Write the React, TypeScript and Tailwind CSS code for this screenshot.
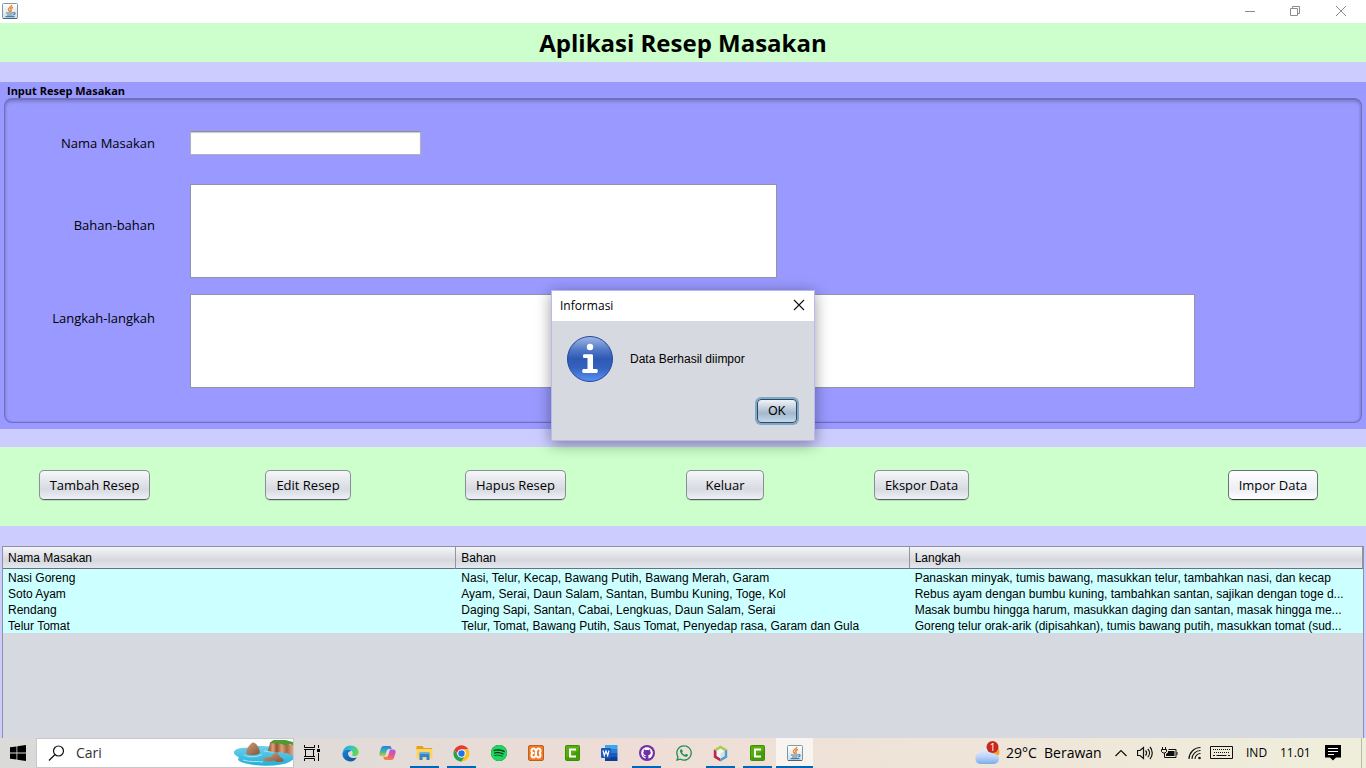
import type { ReactNode } from "react";
import { FaGithub, FaWhatsapp } from "react-icons/fa";
import { SiSpotify } from "react-icons/si";

const recipes = [
  [
    "Nasi Goreng",
    "Nasi, Telur, Kecap, Bawang Putih, Bawang Merah, Garam",
    "Panaskan minyak, tumis bawang, masukkan telur, tambahkan nasi, dan kecap",
  ],
  [
    "Soto Ayam",
    "Ayam, Serai, Daun Salam, Santan, Bumbu Kuning, Toge, Kol",
    "Rebus ayam dengan bumbu kuning, tambahkan santan, sajikan dengan toge d...",
  ],
  [
    "Rendang",
    "Daging Sapi, Santan, Cabai, Lengkuas, Daun Salam, Serai",
    "Masak bumbu hingga harum, masukkan daging dan santan, masak hingga me...",
  ],
  [
    "Telur Tomat",
    "Telur, Tomat, Bawang Putih, Saus Tomat, Penyedap rasa, Garam dan Gula",
    "Goreng telur orak-arik (dipisahkan), tumis bawang putih, masukkan tomat (sud...",
  ],
];

function JavaIcon() {
  return (
    <svg width="16" height="16" viewBox="0 0 16 16" fill="none" aria-hidden="true">
      <defs>
        <linearGradient id="javaBg" x1="0" y1="0" x2="0" y2="1">
          <stop offset="0" stopColor="#ffffff" />
          <stop offset="1" stopColor="#d3dde6" />
        </linearGradient>
      </defs>
      <rect x="0.5" y="0.5" width="15" height="15" rx="1" fill="url(#javaBg)" stroke="#7e97a8" />
      <path d="M1 15.500h14" stroke="#45687f" />
      <path d="M9.800 2C9.500 4 5.800 4.800 6.400 6.800c.3.800 1.200 1 1.400 2M11 4.500C8.800 5 8.300 5.800 9 6.800c.5.600.3 1.300-.2 2" stroke="#ea8420" strokeWidth="1.400" />
      <path d="M4 10h7M5 12h5.500M3.500 13.700h9M11.200 9.800c2.600-.6 2.400 1.700 0 2.100" stroke="#4c7da3" strokeWidth="1.200" />
    </svg>
  );
}

function WindowsLogo() {
  return (
    <svg width="16" height="16" viewBox="0 0 16 16" fill="#000" aria-hidden="true">
      <path d="M0 2.300l6.500-.9v6.200H0zM7.300 1.300L16 0v7.600H7.300zM0 8.400h6.500v6.200L0 13.700zM7.300 8.400H16V16l-8.700-1.300z" />
    </svg>
  );
}

function BeachIcon() {
  return (
    <svg width="59" height="26" viewBox="0 0 59 26" aria-hidden="true">
      <defs>
        <linearGradient id="sea" x1="0" y1="0" x2="0" y2="1">
          <stop offset="0" stopColor="#6fd0ee" />
          <stop offset="1" stopColor="#22afd6" />
        </linearGradient>
        <linearGradient id="rock" x1="0" y1="0" x2="1" y2="1">
          <stop offset="0" stopColor="#cf9e7c" />
          <stop offset="1" stopColor="#855339" />
        </linearGradient>
        <linearGradient id="cliff" x1="0" y1="0" x2="1" y2="0">
          <stop offset="0" stopColor="#8e4a2a" />
          <stop offset="0.200" stopColor="#dda27b" />
          <stop offset="0.350" stopColor="#96502f" />
          <stop offset="0.550" stopColor="#dda27b" />
          <stop offset="0.750" stopColor="#a9643f" />
          <stop offset="1" stopColor="#e0a983" />
        </linearGradient>
      </defs>
      <path d="M0 11.500c3-4 9-3.500 14-4 10-2 16-1.500 24-1l21 5v8c-3 2-5 4-12 5-12 2-24 1.500-35-1-5-1.500-10-3-7-6-3-2-6-3-5-6z" fill="url(#sea)" />
      <path d="M10 15c4 2.500 12 2.500 18-.5M9 20c8 2.500 14 1 20 2M30 11c3 0 5 1 9 1" stroke="#a7e8f7" fill="none" />
      <path d="M12 13.500c0-4 3-8.500 6.500-11 4 0 6.500 5 7.500 10-2 3-11 3.500-14 1z" fill="url(#rock)" />
      <path d="M36 3l3-2 20 4v10c-3 0-4-1-6-2-3 1-5-1-7-1-4 1-7 0-12-1z" fill="url(#cliff)" />
      <path d="M35.500 3l4-3 12 0 7.500 2v3.500l-3-1.500-5 1.500-5-2-5 0z" fill="#4f9a34" />
      <path d="M29 20c1-3 4-3 8-3 2-3 4-4.500 6-4 2 1 2 3 3 4 2 .5 3 2 4 3.500-3 2-8 2-10 0-3 1-8 1.500-11-.5z" fill="url(#rock)" />
    </svg>
  );
}

function EdgeIcon() {
  return (
    <svg width="17" height="17" viewBox="0 0 17 17" aria-hidden="true">
      <defs>
        <linearGradient id="edgeTop" x1="0" y1="0" x2="1" y2="0.300">
          <stop offset="0" stopColor="#1d9fdc" />
          <stop offset="0.500" stopColor="#2fc2cf" />
          <stop offset="1" stopColor="#62d851" />
        </linearGradient>
        <linearGradient id="edgeLow" x1="0" y1="0" x2="1" y2="1">
          <stop offset="0" stopColor="#1688d8" />
          <stop offset="1" stopColor="#124f96" />
        </linearGradient>
      </defs>
      <path d="M.5 8C1 3.500 4.500.5 8.600.5c4.500 0 8 3 8 6.700 0 2.500-2 4-4.300 4-1.600 0-2.600-.7-2-1.500C11.800 7 9 4.500 5.500 4.600 3.300 4.700 1.500 6 .5 8z" fill="url(#edgeTop)" />
      <path d="M.5 8.300c.6-2.200 2.800-3.700 5.200-3.700 1.500 0 2.700.5 3.500 1.300C6.500 6 5.500 8 6.300 10c1 2.800 4.500 4 8.700 2.200-1.500 2.700-3.800 4.300-6.500 4.300-4.800 0-8.400-3.700-8-8.200z" fill="url(#edgeLow)" />
    </svg>
  );
}

function CopilotIcon() {
  return (
    <svg width="17" height="16" viewBox="0 0 17 16" aria-hidden="true">
      <defs>
        <linearGradient id="copA" x1="0" y1="0" x2="0" y2="1">
          <stop offset="0" stopColor="#2a7cec" />
          <stop offset="0.550" stopColor="#3db8a4" />
          <stop offset="1" stopColor="#eec42d" />
        </linearGradient>
        <linearGradient id="copB" x1="0.600" y1="0" x2="0.300" y2="1">
          <stop offset="0" stopColor="#a755ec" />
          <stop offset="0.500" stopColor="#ed5588" />
          <stop offset="1" stopColor="#f28b3e" />
        </linearGradient>
      </defs>
      <path d="M5 1h5.500c1 0 1.500.7 1.800 1.700L12.700 4H10C8.500 4 8 5 7.600 6.300L6 11.500H3C.7 11.500 0 10 .5 8L2 3.300C2.500 1.700 3.500 1 5 1z" fill="url(#copA)" />
      <path d="M12 15H6.500c-1 0-1.500-.7-1.800-1.700L4.300 12H7c1.500 0 2-1 2.400-2.300L11 4.500h3c2.300 0 3 1.500 2.500 3.500L15 12.700C14.500 14.300 13.500 15 12 15z" fill="url(#copB)" />
    </svg>
  );
}

function ExplorerIcon() {
  return (
    <svg width="17" height="16" viewBox="0 0 17 16" aria-hidden="true">
      <path d="M.5 1h6l1.300 2H16v2H.5z" fill="#e3a21a" />
      <path d="M.5 4h16v9.500H.5z" fill="#fcd462" />
      <path d="M3.500 8.500c0-.6.4-1 1-1h8c.6 0 1 .4 1 1V15h-3v-3h-4v3h-3z" fill="#2f86cf" />
      <path d="M3.500 9V8.500c0-.6.4-1 1-1h8c.6 0 1 .4 1 1V9z" fill="#5fb2ec" />
    </svg>
  );
}

function ChromeIcon() {
  return (
    <svg width="17" height="17" viewBox="0 0 48 48" aria-hidden="true">
      <circle cx="24" cy="24" r="23" fill="#fff" />
      <path d="M4.100 12.500a23 23 0 0 1 39.800 0H24a11.500 11.500 0 0 0-10 17.200z" fill="#e33b2e" />
      <path d="M43.900 12.500A23 23 0 0 1 24 47l10-17.300a11.500 11.500 0 0 0-10-17.200z" fill="#fcc31e" />
      <path d="M24 47A23 23 0 0 1 4.100 12.500L14 29.700a11.500 11.500 0 0 0 20 0z" fill="#2aa14c" />
      <circle cx="24" cy="24" r="11.500" fill="#fff" />
      <circle cx="24" cy="24" r="9" fill="#2372e8" />
    </svg>
  );
}

function XamppIcon() {
  return (
    <svg width="16" height="16" viewBox="0 0 16 16" aria-hidden="true">
      <rect x="0.500" y="0.500" width="15" height="15" rx="1.500" fill="#f37a24" stroke="#c05f1c" />
      <path d="M6.300 8H5c-1.500-.2-1.500-1.200-1.500-2.500S4.500 3.500 6 3.500c1.300 0 1 2 2 2s.7-2 2-2c1.500 0 2.500.7 2.500 2S12.500 7.800 11 8c1.500.2 1.500 1.200 1.500 2.500s-1 2-2.500 2c-1.300 0-1-2-2-2s-.7 2-2 2c-1.500 0-2.500-.7-2.500-2S3.500 8.200 5 8h1.300M8 6v4" fill="none" stroke="#fff" strokeWidth="2" />
    </svg>
  );
}

function CamtasiaIcon() {
  return (
    <svg width="15" height="16" viewBox="0 0 15 16" aria-hidden="true">
      <rect x="0.500" y="0.500" width="14" height="15" rx="1" fill="#58ae0c" stroke="#3c8d0a" />
      <path d="M1 13l13-8v10H1z" fill="#459b08" />
      <path d="M11 4.500H5v7h6" fill="none" stroke="#fff" strokeWidth="2" />
    </svg>
  );
}

function WordIcon() {
  return (
    <svg width="17" height="16" viewBox="0 0 17 16" aria-hidden="true">
      <path d="M4 0h12.500v4H4z" fill="#41a5ee" />
      <path d="M4 4h12.500v4H4z" fill="#2b7cd3" />
      <path d="M4 8h12.500v4H4z" fill="#185abd" />
      <path d="M4 12h12.500v4H4z" fill="#103f91" />
      <rect x="0" y="3" width="10" height="10" rx="1" fill="#185abd" />
      <path d="M2 5.500l1.300 5L5 6l1.700 4.500 1.300-5" stroke="#fff" fill="none" strokeWidth="1.200" />
    </svg>
  );
}

function GithubDesktopIcon() {
  return (
    <span className="flex size-4 items-center justify-center rounded-full bg-[#7130a3]">
      <FaGithub className="size-3 text-white" />
    </span>
  );
}

function NetbeansIcon() {
  return (
    <svg width="15" height="17" viewBox="0 0 15 17" aria-hidden="true">
      <path d="M7.500.5l6.700 4-6.700 4-6.700-4z" fill="#a9cd50" />
      <path d="M.8 4.500l6.700 4v8l-6.700-4z" fill="#b92850" />
      <path d="M14.200 4.500l-6.700 4v8l6.700-4z" fill="#4a9fcb" />
      <path d="M7.500 3.500l4 2.500v5l-4 2.500-4-2.500V6z" fill="#f4f4f4" />
      <path d="M7.500 8.500v5l4-2.500V6z" fill="#d9dfe3" />
    </svg>
  );
}

type Task = { name: string; icon: ReactNode; state?: "open" | "active" };

const tasks: Task[] = [
  { name: "Edge", icon: <EdgeIcon /> },
  { name: "Copilot", icon: <CopilotIcon /> },
  { name: "File Explorer", icon: <ExplorerIcon />, state: "open" },
  { name: "Chrome", icon: <ChromeIcon />, state: "open" },
  {
    name: "Spotify",
    icon: (
      <span className="rounded-full bg-[#10381d]">
        <SiSpotify className="size-4 text-[#1ed760]" />
      </span>
    ),
  },
  { name: "XAMPP", icon: <XamppIcon /> },
  { name: "Camtasia", icon: <CamtasiaIcon /> },
  { name: "Word", icon: <WordIcon /> },
  { name: "GitHub Desktop", icon: <GithubDesktopIcon />, state: "open" },
  { name: "WhatsApp", icon: <FaWhatsapp className="size-[18px] text-[#1f8f53]" /> },
  { name: "NetBeans", icon: <NetbeansIcon />, state: "open" },
  { name: "Camtasia Recorder", icon: <CamtasiaIcon />, state: "open" },
  { name: "Java", icon: <JavaIcon />, state: "active" },
];

function TitleBar() {
  return (
    <div className="flex h-[23px] shrink-0 items-center justify-between bg-white pr-px pb-0.5 pl-0.5">
      <JavaIcon />
      <div className="flex items-center text-[#8c8c8c]">
        <button aria-label="Minimize" className="flex w-[45px] justify-center">
          <svg width="10" height="10" viewBox="0 0 10 10" stroke="currentColor">
            <path d="M0 5.500h10" />
          </svg>
        </button>
        <button aria-label="Restore" className="flex w-[45px] justify-center">
          <svg width="10" height="10" viewBox="0 0 10 10" stroke="currentColor" fill="none">
            <path d="M.5 2.500h7v7h-7zM2.500 2.500v-2h7v7h-2" />
          </svg>
        </button>
        <button aria-label="Close" className="flex w-[48px] justify-center">
          <svg width="10" height="10" viewBox="0 0 10 10" stroke="currentColor">
            <path d="M0 0l10 10M10 0L0 10" />
          </svg>
        </button>
      </div>
    </div>
  );
}

const labelClass =
  "w-[155px] shrink-0 text-right font-['Open_Sans',sans-serif] text-[13px] leading-4";
const areaClass =
  "block h-[94px] max-w-full resize-none border border-[#9295a8] bg-white p-1 text-xs outline-none";

function RecipeForm() {
  return (
    <fieldset className="shrink-0 bg-[#9999ff] px-1 pb-1.5">
      <legend className="float-left h-4 w-full px-[3px] font-['Open_Sans',sans-serif] text-[11px] leading-[18px] font-bold">
        Input Resep Masakan
      </legend>
      <div className="clear-both flex flex-col rounded-lg border-x border-t-2 border-b border-[#6f6fbc] pt-[31px] pb-[34px] shadow-[inset_0_2px_3px_#7f7fd4,inset_1px_0_2px_#8888e0,inset_-1px_0_2px_#8888e0]">
        <div className="-ml-[5px] flex items-center gap-[35px]">
          <label htmlFor="nama" className={labelClass}>
            Nama Masakan
          </label>
          <input
            id="nama"
            className="h-6 w-[231px] border border-[#b0b1bd] border-t-[#8e8f96] bg-white px-1 text-xs shadow-[inset_0_1px_1px_#c8c8cc] outline-none"
          />
        </div>
        <div className="mt-[29px] -ml-[5px] flex items-start gap-[35px]">
          <label htmlFor="bahan" className={`${labelClass} pt-[33px]`}>
            Bahan-bahan
          </label>
          <textarea id="bahan" className={`${areaClass} w-[587px]`} />
        </div>
        <div className="mt-4 -ml-[5px] flex items-start gap-[35px]">
          <label htmlFor="langkah" className={`${labelClass} pt-4`}>
            Langkah-langkah
          </label>
          <textarea id="langkah" className={`${areaClass} w-[1005px]`} />
        </div>
      </div>
    </fieldset>
  );
}

const buttonClass =
  "h-[30px] rounded-[5px] border border-[#8b8e96] border-b-[#585b62] bg-linear-to-b from-[#f6f7f9] from-0% via-[#d8dae2] via-65% to-[#eef0f6] font-['Open_Sans',sans-serif] text-[13px] leading-4 whitespace-nowrap shadow-[0_1px_0_#b4e0b8]";

function Actions() {
  return (
    <div className="grid h-[79px] shrink-0 grid-cols-[226px_200px_221px_188px_1fr_auto] items-center justify-items-start bg-[#ccffcc] pr-12 pb-1 pl-[39px]">
      <button className={`${buttonClass} w-[111px]`}>Tambah Resep</button>
      <button className={`${buttonClass} w-[86px]`}>Edit Resep</button>
      <button className={`${buttonClass} w-[101px]`}>Hapus Resep</button>
      <button className={`${buttonClass} w-[78px]`}>Keluar</button>
      <button className={`${buttonClass} w-[95px]`}>Ekspor Data</button>
      <button className="h-[30px] w-[90px] rounded-[5px] border border-[#6d7078] border-b-[#33353a] bg-linear-to-b from-white from-0% via-[#eceef4] via-65% to-white font-['Open_Sans',sans-serif] text-[13px] leading-4 whitespace-nowrap shadow-[0_1px_0_#b4e0b8]">
        Impor Data
      </button>
    </div>
  );
}

function RecipeTable() {
  return (
    <div className="mx-0.5 mt-5 min-h-0 flex-1 overflow-hidden border border-b-0 border-[#8f919f] bg-[#d6d9df]">
      <table className="w-full table-fixed border-separate border-spacing-0 text-left text-[12px]">
        <thead>
          <tr className="h-[22px] bg-linear-to-b from-[#f4f5f7] from-0% via-[#d6d8de] via-60% to-[#e6e9f2] leading-4">
            {["Nama Masakan", "Bahan", "Langkah"].map((name) => (
              <th
                key={name}
                className="border-r border-b border-r-[#93959d] border-b-[#6e7078] p-0 pl-[5px] font-normal"
              >
                {name}
              </th>
            ))}
          </tr>
        </thead>
        <tbody className="bg-[#ccffff] leading-[14px]">
          {recipes.map((row) => (
            <tr key={row[0]} className="h-4">
              {row.map((cell) => (
                <td key={cell} className="overflow-hidden p-0 pt-0.5 pl-[5px] whitespace-nowrap">
                  {cell}
                </td>
              ))}
            </tr>
          ))}
        </tbody>
      </table>
    </div>
  );
}

function InfoIcon() {
  return (
    <svg width="46" height="46" viewBox="0 0 46 46" aria-hidden="true">
      <defs>
        <linearGradient id="info" x1="0" y1="0" x2="0" y2="1">
          <stop offset="0" stopColor="#a3b8e4" />
          <stop offset="0.300" stopColor="#5078c6" />
          <stop offset="0.500" stopColor="#2e59b3" />
          <stop offset="0.700" stopColor="#3462c0" />
          <stop offset="1" stopColor="#5c92f2" />
        </linearGradient>
      </defs>
      <circle cx="23" cy="23" r="22.500" fill="url(#info)" stroke="#2048a0" />
      <circle cx="23" cy="11" r="3.200" fill="#fff" />
      <path d="M17 18.200h7.500c1 0 1.500.5 1.500 1.500V33h3.500c1.700 0 1.700 4 0 4h-13c-1.700 0-1.700-4 0-4h4V22H17c-1.300 0-1.300-3.800 0-3.800z" fill="#fff" />
    </svg>
  );
}

function InfoDialog() {
  return (
    <div className="absolute inset-0 flex items-center justify-center pb-2">
      <div
        role="dialog"
        aria-labelledby="dialog-title"
        className="w-[264px] border border-[#b9b9ee] bg-[#d6d9df] shadow-[0_3px_14px_rgba(0,0,0,0.4)]"
      >
        <div className="flex h-[30px] items-center justify-between bg-white pr-[9px] pl-2">
          <h2 id="dialog-title" className="font-['Open_Sans',sans-serif] text-[12px] leading-4">
            Informasi
          </h2>
          <button aria-label="Close" className="pb-0.5">
            <svg width="12" height="12" viewBox="0 0 12 12" stroke="#111" strokeWidth="1.100">
              <path d="M1 1l10 10M11 1L1 11" />
            </svg>
          </button>
        </div>
        <div className="flex items-center gap-[17px] pt-[15px] pl-[15px] text-[12px] leading-4">
          <InfoIcon />
          <p>Data Berhasil diimpor</p>
        </div>
        <div className="flex justify-end pt-[17px] pr-[17px] pb-[17px]">
          <button className="h-6 w-10 rounded-[4px] border border-[#2f4a61] bg-linear-to-b from-[#f0f4f8] from-0% via-[#a5b8cb] via-60% to-[#c4d9ec] text-[12px] leading-4 shadow-[0_0_0_2px_#7fa9cb]">
            OK
          </button>
        </div>
      </div>
    </div>
  );
}

function Tray() {
  return (
    <div className="ml-auto flex items-center font-['Open_Sans',sans-serif] text-black">
      <svg width="26" height="26" viewBox="0 0 26 26" aria-hidden="true" className="mr-1.5">
        <defs>
          <linearGradient id="cloud" x1="0" y1="0" x2="0" y2="1">
            <stop offset="0" stopColor="#e6effe" />
            <stop offset="0.500" stopColor="#c0d6fa" />
            <stop offset="1" stopColor="#7fabec" />
          </linearGradient>
        </defs>
        <circle cx="19.500" cy="12" r="6" fill="#f4a02c" />
        <path d="M6.500 24a5.500 5.500 0 0 1-.6-10.900C7 9.800 9.500 8.500 12 8.500c3.500 0 6 2 6.700 5 4 0 6.300 2.500 6.300 5.300S22.500 24 19.500 24z" fill="url(#cloud)" />
        <circle cx="18.500" cy="7" r="6" fill="#c72a1c" />
        <text x="18.500" y="11" fontSize="10" fill="#fff" textAnchor="middle">
          1
        </text>
      </svg>
      <span className="w-[38px] text-[14px] leading-4">29°C</span>
      <span className="w-[71px] text-[14px] leading-4">Berawan</span>
      <svg width="12" height="8" viewBox="0 0 12 8" fill="none" stroke="#111" strokeWidth="1.200" className="mr-[10px]">
        <path d="M.5 7L6 1.500 11.500 7" />
      </svg>
      <svg width="16" height="14" viewBox="0 0 16 14" fill="none" stroke="#111" strokeWidth="1.200" className="mr-2">
        <path d="M.5 4.500H3L6.500 1.500v11L3 9.500H.5zM8.500 4.500c1.300 1.500 1.300 3.500 0 5M10.800 2.800c2.200 2.500 2.200 6 0 8.400M13 1c3 3.500 3 8.500 0 12" />
      </svg>
      <svg width="17" height="14" viewBox="0 0 17 14" fill="none" stroke="#111" className="mr-[10px]">
        <path d="M1.500 1v2.500M4.500 1v2.500M.5 3.500h5v2l-1.500 1.500h-2L.5 5.500zM3.500 7v4.500h11.500v-8H7.500M16 6v3" />
        <path d="M7 5h6.500v5H5V8l2-1.500z" fill="#111" stroke="none" />
      </svg>
      <svg width="14" height="14" viewBox="0 0 14 14" fill="none" stroke="#111" strokeWidth="1.100" className="mr-2">
        <path d="M1 13C1 7 6 1.500 12.500 1.500M4 13c0-4.500 3.500-8.500 8.500-8.500M7 13c0-3 2.500-5.500 5.500-5.500" />
        <circle cx="11.500" cy="12" r="1.300" fill="#111" stroke="none" />
      </svg>
      <svg width="23" height="14" viewBox="0 0 23 14" fill="none" stroke="#111" className="mr-[13px]">
        <path d="M.5.500h22v12H.5z" />
        <path d="M3 3.500h17M4 6.500h16" strokeDasharray="1 1" />
        <path d="M3 9.500h2M6.500 9.500h10M18 9.500h2" />
      </svg>
      <span className="w-[34px] text-[12px] leading-4">IND</span>
      <span className="w-[45px] text-[12px] leading-4">11.01</span>
      <svg width="16" height="16" viewBox="0 0 16 16" className="mr-5">
        <path d="M0 0h16v12.500h-5L8 15.500l-3-3H0z" fill="#000" />
        <path d="M3 3.500h10M3 6.500h10M3 9.500h6" stroke="#fff" />
      </svg>
      <span className="h-[30px] w-[5px] border-l border-[#b9b8ac]" />
    </div>
  );
}

function Taskbar() {
  return (
    <footer className="flex h-[30px] shrink-0 items-center bg-linear-to-r from-[#dadad8] from-15% via-[#eeddd6] via-45% to-[#efeedb]">
      <button aria-label="Start" className="flex w-9 justify-center">
        <WindowsLogo />
      </button>
      <div className="flex h-[30px] w-[258px] items-center border border-[#c8c8c8] bg-white pl-[11px]">
        <svg width="17" height="17" viewBox="0 0 17 17" fill="none" stroke="#111" strokeWidth="1.200">
          <circle cx="10.500" cy="6" r="5" />
          <path d="M7 9.500L1 15.500" />
        </svg>
        <input
          aria-label="Cari"
          placeholder="Cari"
          className="ml-[11px] min-w-0 flex-1 bg-transparent font-['Open_Sans',sans-serif] text-[14px] leading-4 outline-none placeholder:text-[#333]"
        />
        <BeachIcon />
      </div>
      <button aria-label="Task View" className="flex w-9 justify-center">
        <svg width="16" height="16" viewBox="0 0 16 16" fill="none" stroke="#000">
          <path d="M.5 0v2.500h10V0M.5 16v-2.500h10V16M0 4.500h11M0 11.500h11M1.500 4.500v7M9.500 4.500v7M14.500 0v3M14.500 8v8" />
          <path d="M13 4h3v3h-3z" fill="#000" stroke="none" />
        </svg>
      </button>
      <div className="ml-0.5 flex">
        {tasks.map((task) => (
          <button
            key={task.name}
            aria-label={task.name}
            className={
              task.state === "active"
                ? "flex h-[30px] w-[37px] items-center justify-center bg-[#f8f4f0] shadow-[inset_0_-2px_0_#0067b8]"
                : task.state === "open"
                  ? "mx-1 flex h-[30px] w-[29px] items-center justify-center shadow-[inset_0_-2px_0_#0067b8]"
                  : "mx-1 flex h-[30px] w-[29px] items-center justify-center"
            }
          >
            {task.icon}
          </button>
        ))}
      </div>
      <Tray />
    </footer>
  );
}

export default function App() {
  return (
    <div className="flex h-screen flex-col overflow-hidden bg-[#ccccff] font-['Liberation_Sans',Arial,sans-serif] text-black">
      <div className="relative flex min-h-0 flex-1 flex-col">
        <TitleBar />
        <h1 className="mb-5 flex h-[39px] shrink-0 items-center justify-center bg-[#ccffcc] font-['Open_Sans',sans-serif] text-[24px] leading-8 font-bold">
          Aplikasi Resep Masakan
        </h1>
        <RecipeForm />
        <div className="h-[18px] shrink-0" />
        <Actions />
        <RecipeTable />
        <InfoDialog />
      </div>
      <Taskbar />
    </div>
  );
}
